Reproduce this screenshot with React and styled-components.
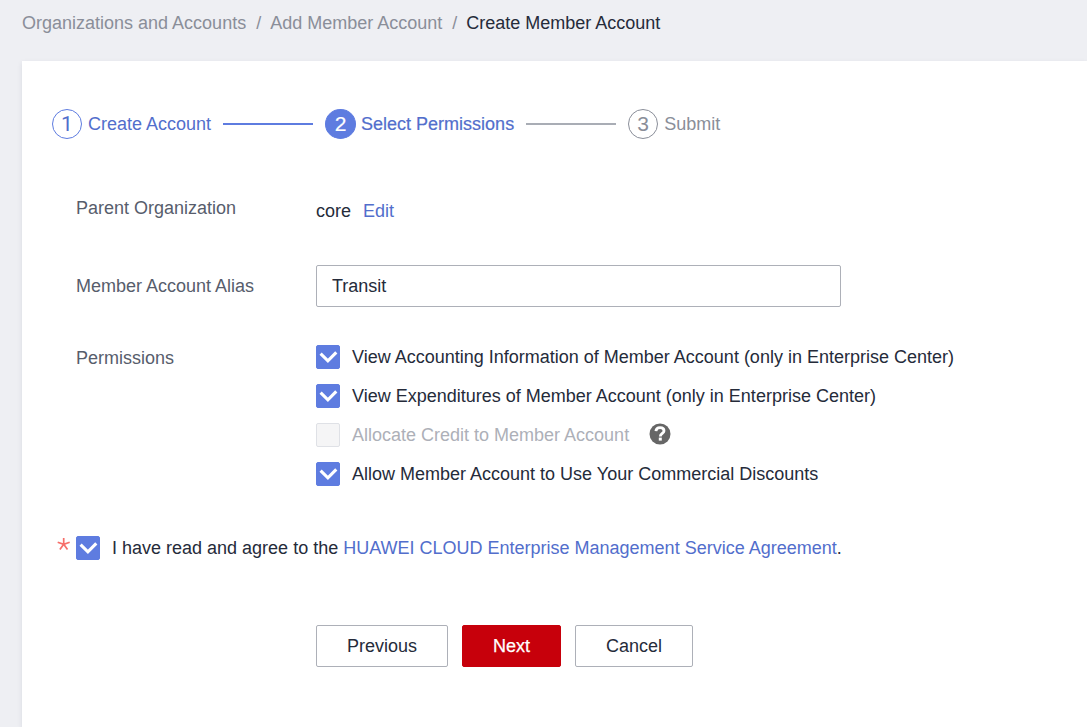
import React from 'react';
import styled, { createGlobalStyle } from 'styled-components';

const GlobalStyle = createGlobalStyle`
  * { box-sizing: border-box; }
  body {
    margin: 0;
    background: #eeeff3;
    color: #252b3a;
    font-family: "Liberation Sans", Arial, sans-serif;
    font-size: 18px;
    line-height: 24px;
    overflow: hidden;
  }
`;

const Page = styled.div`
  display: flex;
  flex-direction: column;
  height: 727px;
  padding-left: 22px;
  white-space: nowrap;
`;

const Breadcrumb = styled.nav`
  display: flex;
  height: 61px;
  padding-top: 11px;
  color: #8a8e99;
`;

const Crumb = styled.span`
  color: ${(p) => (p.$current ? '#252b3a' : 'inherit')};
`;

const Separator = styled.span`
  margin: 0 9px 0 10px;
`;

const Panel = styled.main`
  flex: 1;
  padding: 48px 30px 0;
  background: #fff;
  box-shadow: 0 2px 5px rgba(40, 50, 80, 0.1);
`;

const Steps = styled.div`
  display: flex;
  align-items: center;
  height: 30px;
`;

const stepColor = { done: '#526ecc', active: '#526ecc', pending: '#8a8e99' };

const Step = styled.div`
  display: flex;
  align-items: center;
  gap: 6px;
  color: ${(p) => stepColor[p.$state]};
  -webkit-text-stroke: ${(p) => (p.$state === 'active' ? '0.2px' : '0')};
`;

const StepNumber = styled.span`
  display: flex;
  align-items: center;
  justify-content: center;
  width: ${(p) => (p.$state === 'active' ? 31 : 30)}px;
  height: 30px;
  margin-right: ${(p) => (p.$state === 'active' ? -1 : 0)}px;
  border: 1px solid ${(p) => (p.$state === 'pending' ? '#8a8e99' : '#5e7ce0')};
  border-radius: 50%;
  background: ${(p) => (p.$state === 'active' ? '#5e7ce0' : 'transparent')};
  color: ${(p) => (p.$state === 'active' ? '#fff' : 'inherit')};
  font-family: ${(p) => (p.$state === 'done' ? 'Roboto, sans-serif' : 'inherit')};
  font-size: 21px;
`;

const StepLine = styled.span`
  width: 90px;
  height: 2px;
  margin: 0 12px;
  background: ${(p) => (p.$done ? '#5e7ce0' : '#a9adb5')};
`;

const Form = styled.div`
  padding: 57px 0 0 24px;
`;

const Field = styled.div`
  display: flex;
  align-items: flex-start;
  margin-bottom: ${(p) => p.$gap}px;
`;

const Label = styled.label`
  width: 240px;
  padding-top: ${(p) => p.$offset || 0}px;
  color: #575d6c;
`;

const Value = styled.div`
  display: flex;
  gap: 12px;
  padding-top: 3px;
`;

const Link = styled.a`
  color: #526ecc;
`;

const Input = styled.input`
  width: 525px;
  height: 42px;
  padding: 0 15px;
  border: 1px solid #adb0b8;
  border-radius: 2px;
  background: #fff;
  color: #252b3a;
  font: inherit;
  outline: none;
`;

const Options = styled.div`
  display: flex;
  flex-direction: column;
  gap: 15px;
`;

const Option = styled.div`
  display: flex;
  align-items: center;
  height: 24px;
  color: ${(p) => (p.$disabled ? '#adb0b8' : '#252b3a')};
`;

const Box = styled.span`
  display: flex;
  flex: none;
  width: 24px;
  height: 24px;
  margin-right: 12px;
  border: 1px solid ${(p) => (p.$disabled ? '#dfe1e6' : '#5e7ce0')};
  border-radius: 2px;
  background: ${(p) => (p.$disabled ? '#f5f5f6' : '#5e7ce0')};

  svg { flex: none; margin: -1px; }
`;

const HelpIcon = styled.svg`
  margin: -2px 0 0 20px;
`;

const Agreement = styled.div`
  display: flex;
  align-items: center;
  height: 24px;
  margin: 0 0 65px -19px;
`;

const Required = styled.svg`
  margin: -7px 6px 0 0;
`;

const Actions = styled.div`
  display: flex;
  gap: 14px;
  padding-left: 240px;
`;

const Button = styled.button`
  width: ${(p) => p.$width}px;
  height: 42px;
  padding: 0;
  border: 1px solid ${(p) => (p.$primary ? '#c7000b' : '#adb0b8')};
  border-radius: 2px;
  background: ${(p) => (p.$primary ? '#c7000b' : '#fff')};
  color: ${(p) => (p.$primary ? '#fff' : '#252b3a')};
  font: inherit;
  -webkit-text-stroke: ${(p) => (p.$primary ? '0.25px' : '0')};
`;

function Checkbox({ disabled }) {
  return (
    <Box $disabled={disabled}>
      {!disabled && (
        <svg width="24" height="24" viewBox="0 0 24 24" fill="none">
          <path d="M4.6 8.6 L11.9 15.8 L20.3 7.4" stroke="#fff" strokeWidth="3.1" />
        </svg>
      )}
    </Box>
  );
}

function Help() {
  return (
    <HelpIcon width="22" height="22" viewBox="0 0 22 22" fill="none">
      <circle cx="11" cy="11" r="10.5" fill="#666" />
      <path
        d="M6.9 8.2 C7.1 5.8 8.8 4.7 11.1 4.7 C13.4 4.7 15 6 15 7.9 C15 10.4 11.3 10.4 11.3 13.4"
        stroke="#fff"
        strokeWidth="2.8"
      />
      <path d="M9.8 14.6 h3 v3 h-3 z" fill="#fff" />
    </HelpIcon>
  );
}

export default function App() {
  return (
    <>
      <GlobalStyle />
      <Page>
        <Breadcrumb>
          <Crumb>Organizations and Accounts</Crumb>
          <Separator>/</Separator>
          <Crumb>Add Member Account</Crumb>
          <Separator>/</Separator>
          <Crumb $current>Create Member Account</Crumb>
        </Breadcrumb>
        <Panel>
          <Steps>
            <Step $state="done">
              <StepNumber $state="done">1</StepNumber>
              <span>Create Account</span>
            </Step>
            <StepLine $done />
            <Step $state="active">
              <StepNumber $state="active">2</StepNumber>
              <span>Select Permissions</span>
            </Step>
            <StepLine />
            <Step $state="pending">
              <StepNumber $state="pending">3</StepNumber>
              <span>Submit</span>
            </Step>
          </Steps>
          <Form>
            <Field $gap={42}>
              <Label>Parent Organization</Label>
              <Value>
                <span>core</span>
                <Link>Edit</Link>
              </Value>
            </Field>
            <Field $gap={38}>
              <Label $offset={9}>Member Account Alias</Label>
              <Input defaultValue="Transit" />
            </Field>
            <Field $gap={50}>
              <Label $offset={1}>Permissions</Label>
              <Options>
                <Option>
                  <Checkbox />
                  <span>View Accounting Information of Member Account (only in Enterprise Center)</span>
                </Option>
                <Option>
                  <Checkbox />
                  <span>View Expenditures of Member Account (only in Enterprise Center)</span>
                </Option>
                <Option $disabled>
                  <Checkbox disabled />
                  <span>Allocate Credit to Member Account</span>
                  <Help />
                </Option>
                <Option>
                  <Checkbox />
                  <span>Allow Member Account to Use Your Commercial Discounts</span>
                </Option>
              </Options>
            </Field>
            <Agreement>
              <Required width="13" height="13" viewBox="0 0 13 13">
                <path
                  d="M6.7 0 V6.5 M0.7 4.3 L6.7 6.3 L12.7 4.3 M2.9 11.6 L6.7 6.3 L10.5 11.6"
                  fill="none"
                  stroke="#f66f6a"
                  strokeWidth="1.7"
                />
              </Required>
              <Checkbox />
              <span>
                I have read and agree to the{' '}
                <Link>HUAWEI CLOUD Enterprise Management Service Agreement</Link>.
              </span>
            </Agreement>
            <Actions>
              <Button $width={132}>Previous</Button>
              <Button $width={99} $primary>Next</Button>
              <Button $width={118}>Cancel</Button>
            </Actions>
          </Form>
        </Panel>
      </Page>
    </>
  );
}
